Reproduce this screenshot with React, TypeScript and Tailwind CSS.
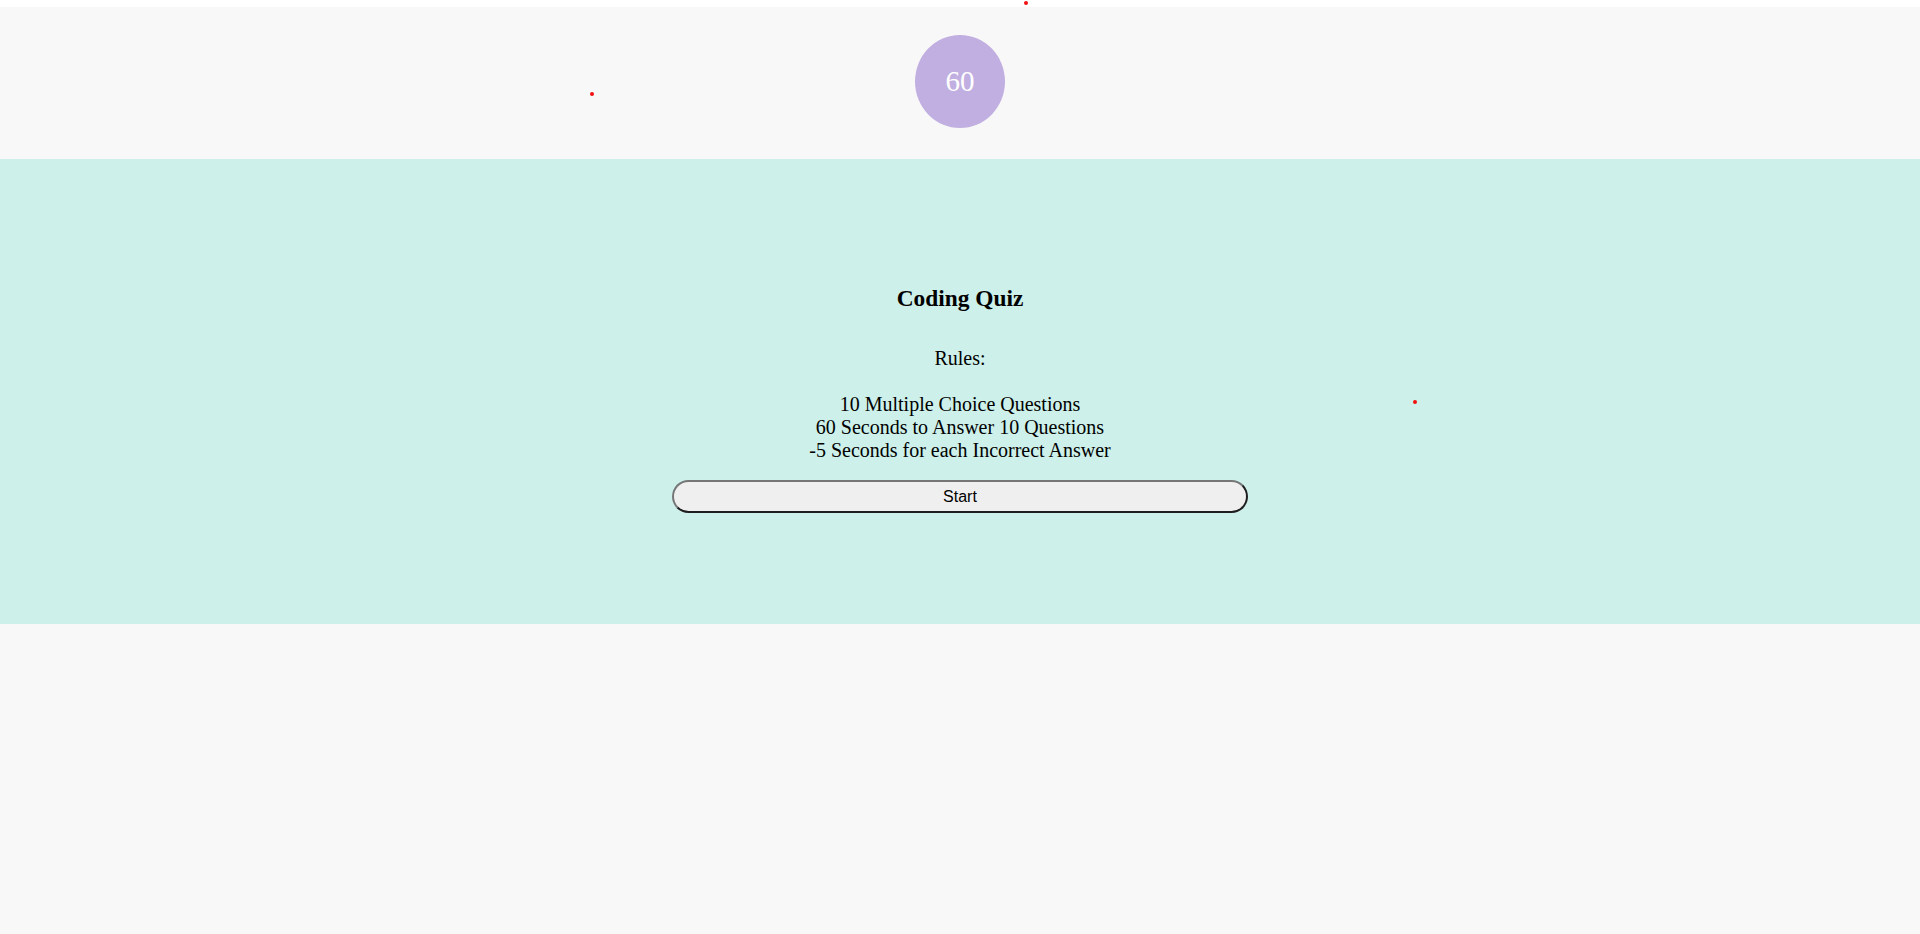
import React from "react";

export default function App() {
  return (
    <div className="relative min-h-[934px] bg-[#f8f8f8] font-['Liberation_Serif',serif] text-black">
      <div className="h-[7px] bg-white" />
      <header className="flex h-[152px] items-start justify-center pt-[28px]">
        <div className="flex h-[93px] w-[90px] items-center justify-center rounded-[50%] bg-[#c1afe1] text-[29px] leading-none text-white">
          60
        </div>
      </header>
      <main className="flex h-[465px] flex-col items-center bg-[#cdf0ea] pt-[126px] text-[20px] leading-[23px]">
        <h3 className="text-[23.4px] font-bold leading-[27px]">Coding Quiz</h3>
        <p className="mt-[35px] text-center">
          Rules:
          <br />
          <br />
          10 Multiple Choice Questions
          <br />
          60 Seconds to Answer 10 Questions
          <br />
          -5 Seconds for each Incorrect Answer
        </p>
        <button className="mt-[18px] h-[33px] w-[576px] rounded-full border-2 border-t-[#767676] border-l-[#767676] border-b-[#1e1e1e] border-r-[#1e1e1e] bg-[#efefef] font-['Liberation_Sans',Arial,sans-serif] text-[16px] leading-none text-black">
          Start
        </button>
      </main>
      <span className="absolute left-[1024px] top-[1px] h-[4px] w-[4px] rounded-full bg-[#f01010]" />
      <span className="absolute left-[590px] top-[92px] h-[4px] w-[4px] rounded-full bg-[#f01010]" />
      <span className="absolute left-[1413px] top-[400px] h-[4px] w-[4px] rounded-full bg-[#f01010]" />
    </div>
  );
}
